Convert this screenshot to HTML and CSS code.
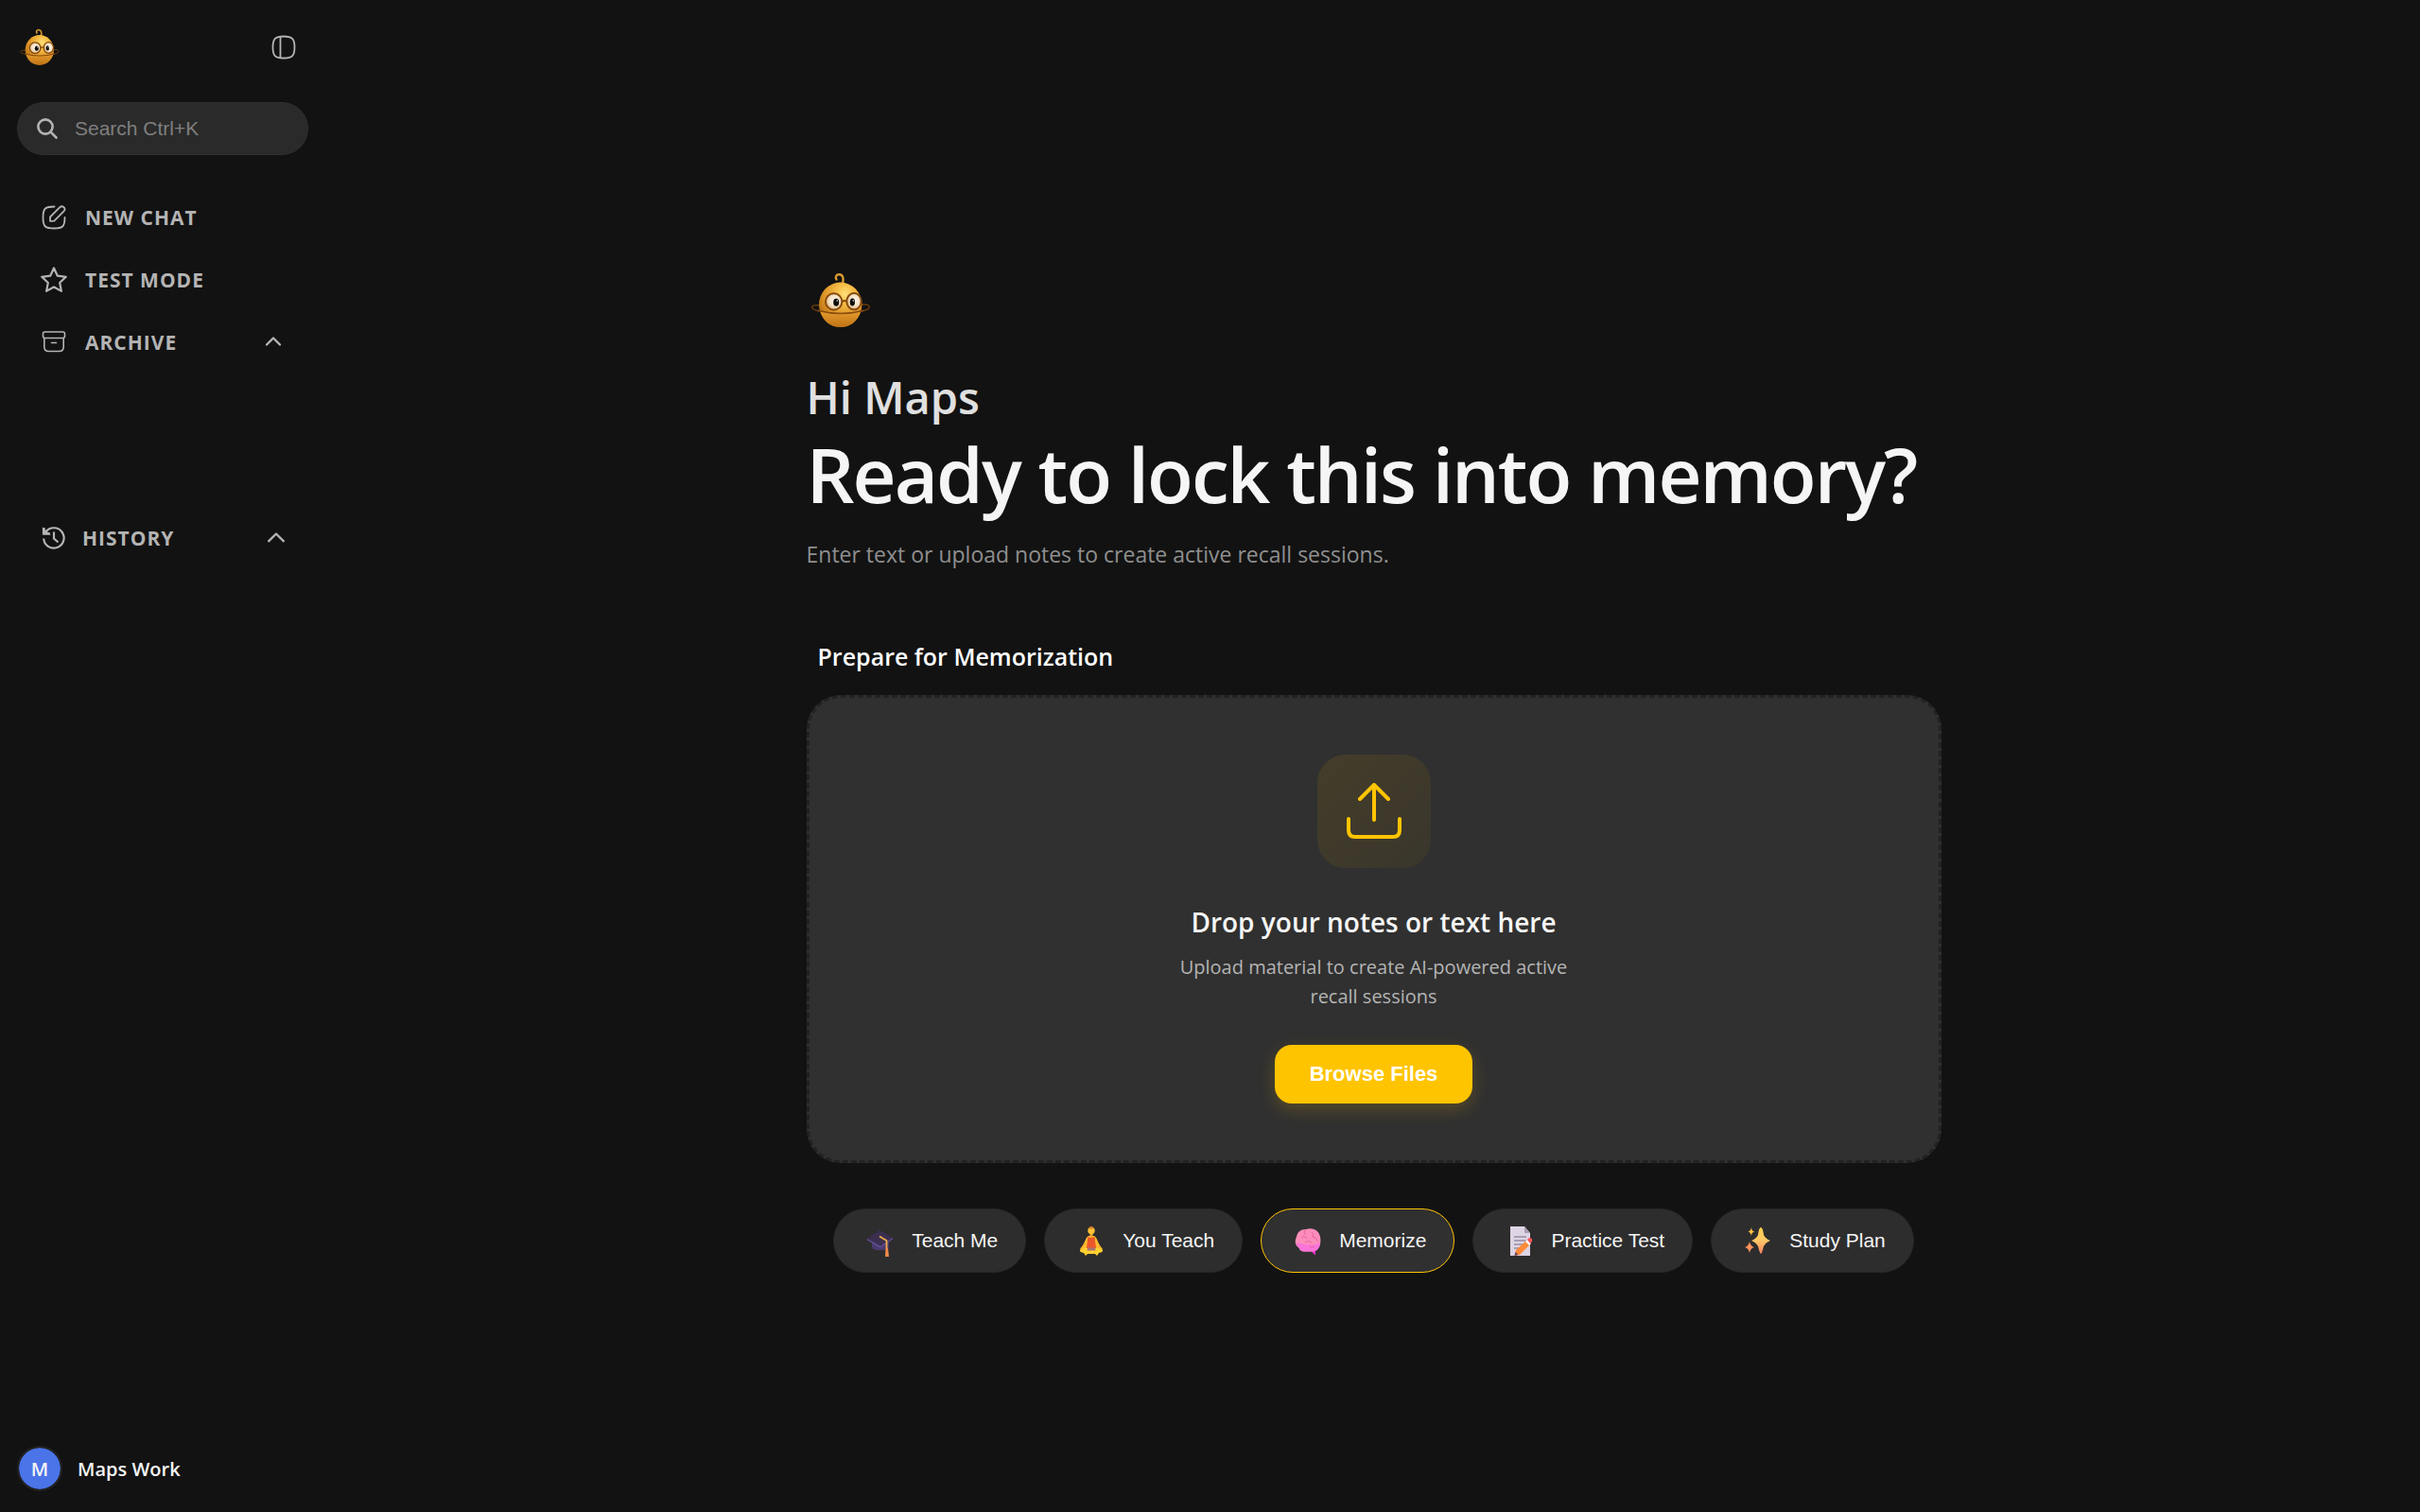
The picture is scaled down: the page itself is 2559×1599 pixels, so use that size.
FILE: index.html
```html
<!DOCTYPE html>
<html lang="en">
<head>
<meta charset="utf-8">
<meta name="viewport" content="width=device-width, initial-scale=1">
<title>Memorize</title>
<link rel="stylesheet" href="styles.css">
</head>
<body>
<svg class="defs" aria-hidden="true">
  <defs>
    <radialGradient id="skin" cx="0.6" cy="0.26" r="0.8">
      <stop offset="0" stop-color="#ffe07a"/>
      <stop offset="0.25" stop-color="#f7bf48"/>
      <stop offset="0.6" stop-color="#dd9526"/>
      <stop offset="1" stop-color="#a65f0c"/>
    </radialGradient>
    <linearGradient id="chin" x1="0" y1="0" x2="0" y2="1">
      <stop offset="0" stop-color="#e39a2c"/>
      <stop offset="1" stop-color="#bf7315"/>
    </linearGradient>
    <radialGradient id="eye" cx="0.55" cy="0.45" r="0.6">
      <stop offset="0" stop-color="#fffaf0"/>
      <stop offset="0.6" stop-color="#f3dfc0"/>
      <stop offset="1" stop-color="#d19a55"/>
    </radialGradient>
    <symbol id="mascot" viewBox="0 0 72 72">
      <path d="M14 41C3 40 3 45 13 47M58 40C69 39 69 45 58 47" fill="none" stroke="#6b3c0c" stroke-width="1.5"/>
      <path d="M38 18C39.500 13 38.500 8.500 34.500 8.300C31 8.200 30 11 31.500 13.500" fill="none" stroke="#d99a30" stroke-width="2.400" stroke-linecap="round"/>
      <ellipse cx="35.700" cy="40.300" rx="22.700" ry="23.700" fill="url(#skin)"/>
      <path d="M14.500 47.500Q36 52.500 57 47.500C54 58 46 64 35.700 64S17.500 58 14.500 47.500Z" fill="url(#chin)"/>
      <path d="M12 46.500Q36 52.500 60 46.500" fill="none" stroke="#874b0c" stroke-width="1.600"/>
      <circle cx="28.700" cy="37" r="8.700" fill="url(#eye)" stroke="#85490d" stroke-width="1.900"/>
      <ellipse cx="50" cy="36.700" rx="7.700" ry="8.700" fill="url(#eye)" stroke="#85490d" stroke-width="1.900"/>
      <path d="M37.500 37Q40 34.800 42.500 37" fill="none" stroke="#85490d" stroke-width="1.900"/>
      <ellipse cx="31.200" cy="37.700" rx="3" ry="4" fill="#0c0b0a"/>
      <ellipse cx="48.400" cy="37.400" rx="2.600" ry="4" fill="#0c0b0a"/>
      <circle cx="32.300" cy="36" r=".8" fill="#fff"/>
      <circle cx="49.300" cy="36" r=".8" fill="#fff"/>
    </symbol>
  </defs>
</svg>
<div class="app">
  <aside class="sidebar">
    <header class="sidebar-head">
      <svg class="logo" aria-label="Logo"><use href="#mascot"/></svg>
      <button class="icon-button" type="button" aria-label="Toggle sidebar">
        <svg viewBox="0 0 28 28" width="28" height="28" fill="none" stroke="#b4b4b4" stroke-width="1.800"><path d="M14 2.500C23 2.500 25.500 5 25.500 14S23 25.500 14 25.500S2.500 23 2.500 14S5 2.500 14 2.500Z"/><path d="M10.500 3V25"/></svg>
      </button>
    </header>
    <label class="search">
      <svg viewBox="0 0 22 22" width="22" height="22" fill="none" stroke="#b4b4b4" stroke-width="2.600" stroke-linecap="round"><circle cx="9" cy="9" r="7.600"/><path d="M14.800 14.800L20.500 20.500"/></svg>
      <input type="text" placeholder="Search Ctrl+K" aria-label="Search">
    </label>
    <nav class="nav">
      <a class="nav-row" href="#new">
        <svg viewBox="0 0 28 28" fill="none" stroke="#b4b4b4" stroke-width="1.800" stroke-linecap="round" stroke-linejoin="round"><path d="M14.500 2.500C5 2.500 2.500 4 2.500 14C2.500 24 5 25.500 14 25.500S25.500 24 25.500 14"/><path d="M10 17.800V13.500L20.300 3.200C21.800 1.700 23.200 2 24.500 3.200C25.800 4.500 26 5.900 24.500 7.400L14.300 17.600Z"/></svg>
        <span>NEW CHAT</span>
      </a>
      <a class="nav-row" href="#test">
        <svg viewBox="0 0 28 28" fill="none" stroke="#b4b4b4" stroke-width="2.200" stroke-linejoin="round"><path d="M14 1.500L17.800 9.700L26.800 10.800L20.200 17L21.900 25.900L14 21.500L6.100 25.900L7.800 17L1.200 10.800L10.200 9.700Z"/></svg>
        <span>TEST MODE</span>
      </a>
      <button class="nav-row" type="button" aria-expanded="true">
        <svg viewBox="0 0 28 28" fill="none" stroke="#b4b4b4" stroke-width="1.600" stroke-linecap="round" stroke-linejoin="round"><rect x="2.500" y="3" width="23" height="6.500" rx="2"/><path d="M3.800 9.500V19Q3.800 23.500 8.500 23.500H19.500Q24.200 23.500 24.200 19V9.500M11.500 14.500H16.500"/></svg>
        <span>ARCHIVE</span>
        <svg class="chevron" viewBox="0 0 18 12" fill="none" stroke="#b4b4b4" stroke-width="2.400" stroke-linecap="round" stroke-linejoin="round"><path d="M2 9.500L9 2.500L16 9.500"/></svg>
      </button>
      <div class="archive-list"></div>
      <button class="nav-row history" type="button" aria-expanded="true">
        <svg viewBox="0 0 28 28" fill="none" stroke="#b4b4b4" stroke-width="2.200" stroke-linecap="butt" stroke-linejoin="miter"><path d="M3.200 14.500A10.700 10.700 0 1 0 5.500 7.300L3.500 9.500M3.500 3V9.300H10M14 7.500V14.500L18.500 18.500"/><path d="M3 5V9.500H8Z" fill="#b4b4b4"/></svg>
        <span>HISTORY</span>
        <svg class="chevron" viewBox="0 0 18 12" fill="none" stroke="#b4b4b4" stroke-width="2.400" stroke-linejoin="round"><path d="M0.500 11L9 2.500L17.500 11"/></svg>
      </button>
    </nav>
    <a class="account" href="#account"><span class="avatar">M</span><span>Maps Work</span></a>
  </aside>
  <main class="main">
    <div class="content">
      <svg class="hero-mascot" aria-hidden="true"><use href="#mascot"/></svg>
      <p class="greeting">Hi Maps</p>
      <h1>Ready to lock this into memory?</h1>
      <p class="lead">Enter text or upload notes to create active recall sessions.</p>
      <h2>Prepare for Memorization</h2>
      <section class="dropzone">
        <div class="upload-icon">
          <svg viewBox="0 0 60 60" width="60" height="60" fill="none" stroke="#ffc400" stroke-width="4" stroke-linecap="round" stroke-linejoin="round"><path d="M3 38V50Q3 57 10 57H50Q57 57 57 50V38M30 39V2M15 17L30 2L45 17"/></svg>
        </div>
        <h3>Drop your notes or text here</h3>
        <p>Upload material to create AI-powered active recall sessions</p>
        <button class="browse" type="button">Browse Files</button>
      </section>
      <div class="chips">
        <button class="chip" type="button">
          <svg viewBox="0 0 40 40"><path d="M11 18V27Q12 30 17 30H24Q29 30 29 27V18Z" fill="#4b3a6e"/><path d="M6 18L19 9L33 17L20 26Z" fill="#3b2f50"/><path d="M6 18L20 26L33 17V18.500L20 27.500L6 19.500Z" fill="#66509a"/><path d="M19 15.500L26.500 20V28" fill="none" stroke="#efae48" stroke-width="1.800"/><path d="M25.500 28H28L29 37H25Z" fill="#f08a4c"/></svg>
          Teach Me</button>
        <button class="chip" type="button">
          <svg viewBox="0 0 40 40"><path d="M17 15C13 17 14 23 8 28.500L13 31H27L32 28.500C26 23 27 17 23 15Z" fill="#ffb92e"/><path d="M13 28L8 29.500Q7 32 12 33L14 36L16 34H24L26 36L28 33Q33 32 32 29.500L27 28Z" fill="#ffd02e"/><path d="M16.500 16Q20 18 23.500 16L25 28H15Z" fill="#ec5729"/><path d="M16 27.500H24L24.500 30.500H15.500Z" fill="#a57478"/><path d="M18.500 11H21.500V16Q20 18 18.500 16Z" fill="#f7a52b"/><circle cx="20" cy="9.500" r="3.700" fill="#ffc133"/><path d="M17 7.500Q20 2 23 7.500Z" fill="#d9822a"/></svg>
          You Teach</button>
        <button class="chip active" type="button" aria-pressed="true">
          <svg viewBox="0 0 40 40"><path d="M23 29L28 29V35.500L24 32Z" fill="#e635c9"/><path d="M18 8C26 5.500 32 10 33 16C34 21 33 27 30 29C28 32 22 32 19 31C15 32 11 31 11 28C6 25 6 20 8 16C9 11 12 8 18 8Z" fill="#ff8dbb"/><path d="M8 23C13 22 15 25 21 24C26 26 29 24 33 22C33 28 29 32 25 31C20 32.500 11 32 11 28Q8 26 8 23Z" fill="#fb74da"/><path d="M17 9Q15 12 18 14M13 17Q17 14 19 18M24 11Q27 13 25 16Q30 17 30 21M17 22Q21 19 24 22M22 27Q25 25 27 27" fill="none" stroke="#e2659f" stroke-width="1"/></svg>
          Memorize</button>
        <button class="chip" type="button">
          <svg viewBox="0 0 40 40"><path d="M10 5H25L31 12V36H10Z" fill="#ddd4e4"/><path d="M25 5V12H31Z" fill="#aa9fb4"/><path d="M14 16H27M14 20H27M14 24H24M14 28H19" stroke="#978da2" stroke-width="1.300"/><path d="M15 35.500L16 30L27 20L31 24L20 35Z" fill="#ff8a39"/><path d="M26 21L28 19L32 23L30 25Z" fill="#fff"/><path d="M28 19L30 17Q34 17 33 21L31 23Z" fill="#f75658"/><path d="M14.500 36L15.500 32L18.500 35Z" fill="#69404c"/></svg>
          Practice Test</button>
        <button class="chip" type="button">
          <svg viewBox="0 0 40 40"><defs><linearGradient id="gold" x1="0" y1="0" x2="0" y2="1"><stop offset="0" stop-color="#ffcf4b"/><stop offset=".5" stop-color="#ffc765"/><stop offset="1" stop-color="#f78264"/></linearGradient></defs><path d="M23 6Q25 6 26 14Q28 18 33 20Q28 22 26 26Q24 34 23 34Q22 34 20 26Q18 22 13 20Q18 18 20 14Q21 6 23 6Z" fill="url(#gold)"/><path d="M13 6Q13 10 16.500 10.500Q13 11 13 15Q12 11 9.500 10.500Q12 10 13 6Z" fill="#ffc044"/><path d="M11 21Q12 26 16 27Q12 28 11 33Q10 28 6 27Q10 26 11 21Z" fill="#ff925c"/></svg>
          Study Plan</button>
      </div>
    </div>
  </main>
</div>
</body>
</html>
```

FILE: styles.css
```css
* { box-sizing: border-box; margin: 0; }

body {
  background: #121212;
  color: #f5f5f5;
  font-family: "Open Sans", "Noto Sans", sans-serif;
}

button { font: inherit; color: inherit; background: none; border: 0; padding: 0; cursor: pointer; }
a { color: inherit; text-decoration: none; }
.defs { position: absolute; width: 0; height: 0; }

.app { display: flex; min-height: 100vh; }

/* Sidebar */
.sidebar {
  flex: 0 0 346px;
  min-width: 0;
  display: flex;
  flex-direction: column;
  padding: 20px 20px 22px 18px;
}
.sidebar-head { display: flex; align-items: center; justify-content: space-between; height: 60px; padding-right: 12px; }
.logo { width: 48px; height: 48px; }
.icon-button { display: flex; }

.search {
  display: flex;
  align-items: center;
  gap: 18px;
  height: 56px;
  margin-top: 28px;
  padding: 0 20px;
  background: #2a2a2a;
  border: 1px solid #303030;
  border-radius: 28px;
}
.search svg { flex: none; }
.search input {
  flex: 1;
  width: 0;
  min-width: 0;
  padding: 0;
  background: none;
  border: 0;
  outline: 0;
  color: #f5f5f5;
  font: 21px "Liberation Sans", Arial, sans-serif;
}
.search input::placeholder { color: #7f7f7f; opacity: 1; }

.nav { display: flex; flex-direction: column; margin-top: 33px; }
.nav-row {
  display: flex;
  align-items: center;
  gap: 19px;
  height: 66px;
  padding: 0 28px 0 25px;
  color: #b4b4b4;
  font-size: 21px;
  font-weight: 700;
  letter-spacing: 1px;
  text-align: left;
}
.nav-row svg { flex: none; width: 28px; height: 28px; }
.nav-row .chevron { width: 18px; height: 12px; margin: 0 0 3px auto; }
.history { gap: 16px; padding-right: 25px; }
.archive-list { min-height: 141px; }

.account {
  display: flex;
  align-items: center;
  gap: 16px;
  margin-top: auto;
  font-size: 20px;
  font-weight: 600;
}
.avatar {
  display: grid;
  place-items: center;
  width: 48px;
  height: 48px;
  background: #4a74e8;
  background-clip: padding-box;
  border: 2px solid #222;
  border-radius: 50%;
}

/* Main column */
.main {
  flex: 1;
  display: flex;
  flex-direction: column;
  align-items: center;
  justify-content: center;
  padding: 28px 24px 0;
}
.content { width: 100%; max-width: 1200px; }
.hero-mascot { display: block; width: 72px; height: 72px; }
.greeting { margin-top: 36px; color: #e0e0e0; font-size: 47px; font-weight: 600; line-height: 60px; }
h1 { margin-top: 3px; font-size: 80px; font-weight: 600; line-height: 96px; letter-spacing: -2px; }
.lead { margin-top: 20px; color: #8f8f8f; font-size: 23px; line-height: 34px; }
h2 { margin: 73px 12px 0; color: #fff; font-size: 25px; font-weight: 600; line-height: 36px; }

.dropzone {
  display: flex;
  flex-direction: column;
  align-items: center;
  margin-top: 23px;
  padding: 60px;
  background: #303030;
  border: 3px dashed #222;
  border-radius: 36px;
  text-align: center;
}
.upload-icon {
  display: grid;
  place-items: center;
  width: 120px;
  height: 120px;
  background: linear-gradient(135deg, #453d2a, #39362c);
  border-radius: 30px;
}
h3 { margin-top: 37px; font-size: 28px; font-weight: 600; line-height: 40px; }
.dropzone p { max-width: 450px; margin-top: 12px; color: #b4b4b4; font-size: 20px; line-height: 31px; }
.browse {
  height: 62px;
  margin-top: 36px;
  padding: 0 37px;
  background: #ffc400;
  border-radius: 18px;
  box-shadow: 0 6px 18px rgba(255, 196, 0, 0.2);
  color: #fff;
  font: 700 22px "Liberation Sans", Arial, sans-serif;
}

.chips { display: flex; flex-wrap: wrap; justify-content: center; gap: 19px; margin-top: 48px; }
.chip {
  display: flex;
  align-items: center;
  gap: 13px;
  height: 68px;
  padding: 0 29px;
  background: #2d2d2d;
  border: 1px solid #272727;
  border-radius: 34px;
  font: 21px "Liberation Sans", Arial, sans-serif;
}
.chip svg { width: 40px; height: 40px; }
.chip.active { background: #303030; border-color: #ffc400; }
```
